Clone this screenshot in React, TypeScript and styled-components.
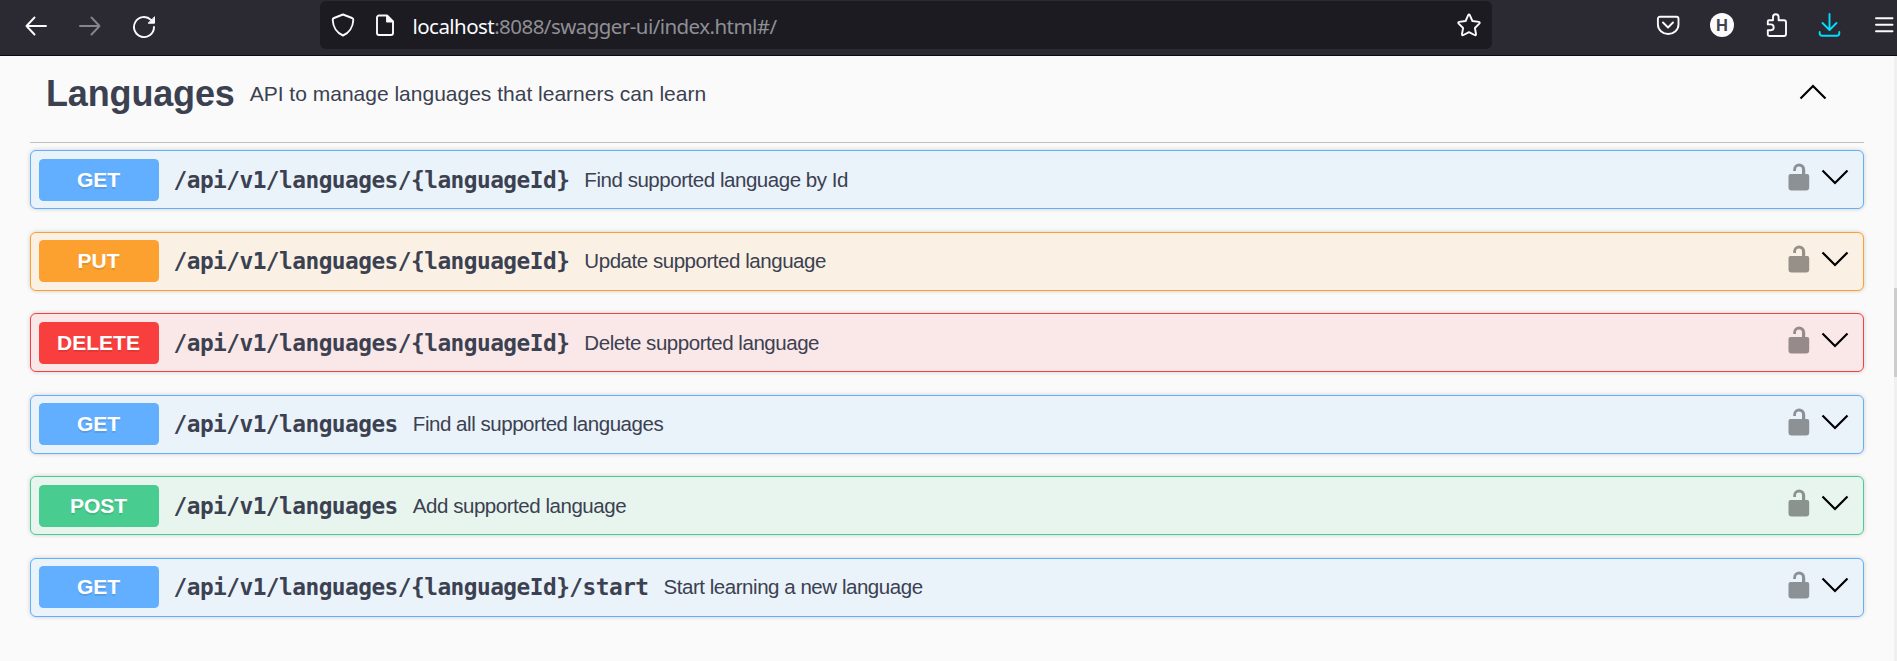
import React from 'react';
import styled, { createGlobalStyle } from 'styled-components';

const Global = createGlobalStyle`
  * { box-sizing: border-box; }
  body { margin: 0; background: #fafafa; overflow: hidden; }
`;

const sans = `'Liberation Sans', Arial, sans-serif`;

const Page = styled.div`
  width: 100%;
  height: 661px;
  display: flex;
  flex-direction: column;
  background: #fafafa;
  font-family: ${sans};
  color: #3b4151;
  overflow: hidden;
`;

const Toolbar = styled.header`
  height: 56px;
  flex: none;
  display: flex;
  align-items: flex-start;
  background: #2b2a33;
  border-bottom: 1px solid #0c0c0d;
`;

const NavButtons = styled.div`
  width: 320px;
  height: 52px;
  padding-left: 24px;
  display: flex;
  align-items: center;
  gap: 30px;
`;

const AddressBar = styled.div`
  width: 1172px;
  height: 48px;
  margin-top: 1px;
  padding: 0 11px;
  display: flex;
  align-items: center;
  background: #1c1b22;
  border-radius: 6px;
`;

const SiteIcons = styled.div`
  display: flex;
  gap: 20px;
`;

const Url = styled.div`
  flex: 1;
  margin-left: 17.5px;
  padding-top: 2px;
  font-family: 'Noto Sans', 'Open Sans', sans-serif;
  font-size: 20.5px;
  line-height: 28px;
  letter-spacing: -0.55px;
  color: #8f8f94;
  white-space: nowrap;
`;

const Host = styled.span`
  color: #fbfbfe;
`;

const Actions = styled.div`
  height: 50px;
  margin-left: 164px;
  display: flex;
  align-items: center;
  gap: 30px;
`;

const Glyph = styled.svg`
  display: block;
  flex: none;
  fill: none;
  stroke: ${(p) => p.color || '#fbfbfe'};
  stroke-width: 1.9;
  stroke-linecap: round;
  stroke-linejoin: round;
`;

const Avatar = styled.span`
  width: 24px;
  height: 24px;
  border-radius: 50%;
  background: #fbfbfe;
  color: #42414d;
  font-size: 16.5px;
  font-weight: 700;
  line-height: 25px;
  text-align: center;
`;

const Body = styled.div`
  flex: 1;
  display: flex;
  min-height: 0;
`;

const Section = styled.main`
  width: 1834px;
  margin-left: 30px;
`;

const ScrollTrack = styled.div`
  width: 3px;
  margin-left: auto;
  padding-top: 232px;
  background: #f0f0f0;
`;

const ScrollThumb = styled.div`
  height: 89px;
  background: #cdcdcd;
`;

const TagHeader = styled.div`
  height: 87px;
  padding: 0 37px 11px 16px;
  display: flex;
  align-items: center;
  border-bottom: 1px solid #c0c1c4;
`;

const TagTitle = styled.h3`
  margin: 0;
  font-size: 36px;
  line-height: 42px;
  font-weight: 700;
  letter-spacing: -0.15px;
`;

const TagText = styled.p`
  flex: 1;
  margin: 0 0 0 15px;
  font-size: 21px;
  line-height: 26px;
`;

const Operations = styled.div`
  padding-top: 7.4px;
  display: flex;
  flex-direction: column;
  gap: 22.5px;
`;

const Operation = styled.div<{ $line: string; $fill: string }>`
  height: 59px;
  padding: 0 14px 0 7.5px;
  display: flex;
  align-items: center;
  background: ${(p) => p.$fill};
  border: 1px solid ${(p) => p.$line};
  border-radius: 6px;
  box-shadow: 0 0 4.5px rgba(0, 0, 0, 0.19);
`;

const Method = styled.span<{ $color: string }>`
  width: 120px;
  height: 42px;
  border-radius: 4.5px;
  background: ${(p) => p.$color};
  color: #fff;
  font-size: 21px;
  font-weight: 700;
  line-height: 41px;
  text-align: center;
  text-shadow: 0 1.5px 0 rgba(0, 0, 0, 0.1);
`;

const Path = styled.span`
  margin-left: 15px;
  font-family: 'DejaVu Sans Mono', monospace;
  font-weight: 700;
  font-size: 22.8px;
  line-height: 28px;
  letter-spacing: -0.53px;
  white-space: nowrap;
`;

const Summary = styled.span`
  flex: 1;
  margin-left: 15px;
  font-size: 20.5px;
  line-height: 24px;
  letter-spacing: -0.46px;
  white-space: nowrap;
`;

const LockIcon = styled.svg`
  display: block;
  margin: -5px 11px 0 0;
`;

const Chevron = styled.svg<{ $lift: number }>`
  display: block;
  margin-top: -${(p) => p.$lift}px;
`;

const palette: Record<string, [string, string]> = {
  GET: ['#61affe', '#eaf2fa'],
  PUT: ['#fca130', '#faf0e3'],
  DELETE: ['#f93e3e', '#fae7e7'],
  POST: ['#49cc90', '#e8f5ee'],
};

const operations = [
  { method: 'GET', path: '/api/v1/languages/{languageId}', text: 'Find supported language by Id' },
  { method: 'PUT', path: '/api/v1/languages/{languageId}', text: 'Update supported language' },
  { method: 'DELETE', path: '/api/v1/languages/{languageId}', text: 'Delete supported language' },
  { method: 'GET', path: '/api/v1/languages', text: 'Find all supported languages' },
  { method: 'POST', path: '/api/v1/languages', text: 'Add supported language' },
  { method: 'GET', path: '/api/v1/languages/{languageId}/start', text: 'Start learning a new language' },
];

export default function App() {
  return (
    <Page>
      <Global />
      <Toolbar>
        <NavButtons>
          <Glyph width="24" height="24" viewBox="0 0 24 24"><path d="M2.5 12H22M10.5 3.5L2.5 12l8 8.5" /></Glyph>
          <Glyph width="24" height="24" viewBox="0 0 24 24" color="#86858a"><path d="M2 12h19.5M13.500 3.500l8 8.500-8 8.500" /></Glyph>
          <Glyph width="24" height="24" viewBox="0 0 24 24">
            <path d="M22 13A10 10 0 1 1 19 5.900" />
            <path d="M22.500 3.200v6h-6z" fill="#fbfbfe" strokeWidth="1" />
          </Glyph>
        </NavButtons>
        <AddressBar>
          <SiteIcons>
            <Glyph width="24" height="24" viewBox="0 0 24 24"><path d="M12 1.500L21 5q1.500.5 1.300 2C22 14 18 20 12 22.500 6 20 2 14 1.700 7 1.600 5.500 3 5 3 5z" /></Glyph>
            <Glyph width="20" height="24" viewBox="0 0 20 24">
              <path d="M4 2.500h8l6 6V20a2 2 0 0 1-2 2H4a2 2 0 0 1-2-2V4.500a2 2 0 0 1 2-2z" />
              <path d="M12 3v5.500h5.500z" fill="#fbfbfe" />
            </Glyph>
          </SiteIcons>
          <Url><Host>localhost</Host>:8088/swagger-ui/index.html#/</Url>
          <Glyph width="24" height="24" viewBox="0 0 24 24"><path d="M11.100 2.300q.9-1.500 1.800 0L15.400 8l6.400.9q1.600.4.500 1.700L17.900 15l1.100 6q.1 1.700-1.500 1L12 19.100 6.500 22q-1.600.7-1.500-1l1.100-6-4.400-4.400Q.6 9.300 2.200 8.900L8.600 8z" /></Glyph>
        </AddressBar>
        <Actions>
          <Glyph width="24" height="24" viewBox="0 0 24 24"><path d="M4 3.800h16.500a2 2 0 0 1 2 2V11.500a10.300 9.500 0 0 1-20.600 0V5.800a2 2 0 0 1 2-2zM7 9.500l5 5 5-5" /></Glyph>
          <Avatar>H</Avatar>
          <Glyph width="24" height="24" viewBox="0 0 24 24"><path d="M5 7.300h4V4a2.800 2.800 0 0 1 5.600 0v3.300H20a2 2 0 0 1 2 2V21a2 2 0 0 1-2 2H5.300a1.500 1.500 0 0 1-1.500-1.500V17.200h3a2.900 2.900 0 0 0 0-5.800h-3V8.500q0-1.200 1.200-1.200z" /></Glyph>
          <Glyph width="24" height="24" viewBox="0 0 24 24" color="#00ddff"><path d="M11.500 1v15.500M4.500 10l7 7 7-7M1.700 19v1.300a2.500 2.500 0 0 0 2.500 2.500h14.600a2.500 2.500 0 0 0 2.500-2.500V19" /></Glyph>
          <Glyph width="24" height="24" viewBox="0 0 24 24"><path d="M4 5.200h16.500M4 11.700h16.500M4 18.200h16.500" /></Glyph>
        </Actions>
      </Toolbar>
      <Body>
        <Section>
          <TagHeader>
            <TagTitle>Languages</TagTitle>
            <TagText>API to manage languages that learners can learn</TagText>
            <Chevron $lift={3} width="28" height="16" viewBox="0 0 28 16"><path d="M1.500 14.500L14 2l12.500 12.500" fill="none" stroke="#000" strokeWidth="2.200" /></Chevron>
          </TagHeader>
          <Operations>
            {operations.map((op, i) => (
              <Operation key={i} $line={palette[op.method][0]} $fill={palette[op.method][1]}>
                <Method $color={palette[op.method][0]}>{op.method}</Method>
                <Path>{op.path}</Path>
                <Summary>{op.text}</Summary>
                <LockIcon width="22" height="28" viewBox="0 0 22 28"><path d="M2.500 11H14V6.500a3 3 0 0 0-6 0V8H5.200V6.500a6 6 0 0 1 12 0V11h2a2 2 0 0 1 2 2V24.500a3 3 0 0 1-3 3h-14.700a3 3 0 0 1-3-3V13a2 2 0 0 1 2-2z" fill="#000" fillOpacity=".4" /></LockIcon>
                <Chevron $lift={5} width="28" height="16" viewBox="0 0 28 16"><path d="M1.500 1.500L14 14 26.500 1.500" fill="none" stroke="#000" strokeWidth="2.200" /></Chevron>
              </Operation>
            ))}
          </Operations>
        </Section>
        <ScrollTrack><ScrollThumb /></ScrollTrack>
      </Body>
    </Page>
  );
}
